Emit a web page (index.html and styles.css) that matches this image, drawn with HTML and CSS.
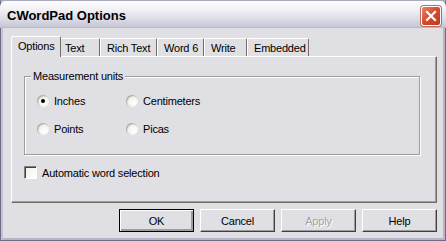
FILE: index.html
```html
<!DOCTYPE html>
<html lang="en">
<head>
    <meta charset="UTF-8">
    <title>CWordPad Options</title>
    <link rel="stylesheet" href="styles.css">
</head>
<body>
    <div class="window">
        <div class="titlebar">
            <span class="title">CWordPad Options</span>
            <span class="close-btn">
                <svg width="12" height="12" viewBox="0 0 12 12">
                    <path d="M2 2 L10 10 M10 2 L2 10" stroke="#fff" stroke-width="2.2" stroke-linecap="square"/>
                </svg>
            </span>
        </div>

        <div class="content">
            <div class="tabs">
                <div class="tab tab-options selected">Options</div>
                <div class="tab tab-text">Text</div>
                <div class="tab tab-rich">Rich Text</div>
                <div class="tab tab-word">Word 6</div>
                <div class="tab tab-write">Write</div>
                <div class="tab tab-embedded">Embedded</div>
            </div>

            <div class="panel">
                <fieldset class="group">
                    <legend>Measurement units</legend>
                    <div class="radio-grid">
                        <label class="radio"><span class="radio-dot checked"></span>Inches</label>
                        <label class="radio"><span class="radio-dot"></span>Centimeters</label>
                        <label class="radio"><span class="radio-dot"></span>Points</label>
                        <label class="radio"><span class="radio-dot"></span>Picas</label>
                    </div>
                </fieldset>

                <label class="check"><span class="check-box"></span>Automatic word selection</label>
            </div>

            <div class="buttons">
                <div class="btn default">OK</div>
                <div class="btn">Cancel</div>
                <div class="btn disabled">Apply</div>
                <div class="btn">Help</div>
            </div>
        </div>
    </div>
</body>
</html>
```

FILE: styles.css
```css
:root {
    --face: #e0dfe3;
    --shadow: #9d9da1;
    --dark: #716f64;
}

body {
    margin: 0;
    background: #ffffff;
}

.window {
    width: 446px;
    height: 241px;
    box-sizing: border-box;
    background: var(--face);
    border: 1px solid #6e6d87;
    border-top-color: #a9a9bd;
    box-shadow: inset 2px 0 0 #c3c3d3, inset -2px 0 0 #b5b5c7, inset 0 -2px 0 #b5b5c7;
    display: flex;
    flex-direction: column;
    font-family: "Liberation Sans", Arial, sans-serif;
    font-size: 11px;
    letter-spacing: -0.2px;
    color: #000;
}

.titlebar {
    height: 26px;
    margin: 0 -1px;
    padding: 0 5px 0 7px;
    display: flex;
    align-items: center;
    justify-content: space-between;
    background: linear-gradient(#ffffff 0%, #f2f2f6 30%, #dcdce6 70%, #c6c6d6 100%);
    border-radius: 6px 6px 0 0;
    border-bottom: 1px solid #b8b8c8;
}

.title {
    font-weight: bold;
    font-size: 13px;
    letter-spacing: 0;
    color: #000;
    margin-top: 2px;
}

.close-btn {
    width: 20px;
    height: 20px;
    margin-top: 3px;
    box-sizing: border-box;
    border: 1px solid #ffffff;
    border-radius: 3px;
    background: linear-gradient(135deg, #e8836a 0%, #d5482b 50%, #c0391e 100%);
    box-shadow: 0 0 0 1px #b96c5c;
    display: flex;
    align-items: center;
    justify-content: center;
}

.content {
    flex: 1;
    padding: 9px 8px 0 10px;
    display: flex;
    flex-direction: column;
}

.tabs {
    display: flex;
    align-items: flex-end;
    height: 19px;
    position: relative;
    z-index: 1;
}

.tab {
    height: 18px;
    padding: 0 0 0 6px;
    display: flex;
    align-items: center;
    box-sizing: border-box;
    background: var(--face);
    border-top: 1px solid #fff;
    border-left: 1px solid #fff;
    border-right: 1px solid var(--dark);
    border-radius: 2px 2px 0 0;
    margin-top: 2px;
}

.tab-options { width: 50px; }
.tab-text { width: 40px; padding-left: 4px; }
.tab-rich { width: 57px; }
.tab-word { width: 47px; }
.tab-write { width: 43px; }
.tab-embedded { width: 62px; }

.tab.selected {
    height: 21px;
    margin: 0 -1px -1px 0;
    padding-top: 3px;
    align-items: flex-start;
    position: relative;
}

.panel {
    height: 147px;
    box-sizing: border-box;
    border-top: 1px solid #fff;
    border-left: 1px solid #fff;
    border-right: 1px solid var(--dark);
    border-bottom: 1px solid var(--dark);
    box-shadow: inset -1px -1px 0 var(--shadow);
    padding: 13px 16px 0 12px;
}

.group {
    margin: 0;
    padding: 0 0 0 12px;
    height: 85px;
    box-sizing: border-box;
    border: 1px solid var(--shadow);
    box-shadow: 1px 1px 0 #fff, inset 1px 1px 0 #fff;
}

.group legend {
    padding: 0 2px;
    margin-left: -6px;
    background: var(--face);
    line-height: 12px;
}

.radio-grid {
    display: grid;
    grid-template-columns: 89px 1fr;
    row-gap: 15px;
    margin-top: 12px;
}

.radio {
    display: flex;
    align-items: center;
    gap: 5px;
    height: 13px;
}

.radio-dot {
    width: 12px;
    height: 12px;
    box-sizing: border-box;
    border-radius: 50%;
    background: radial-gradient(circle at 65% 65%, #ffffff 0%, #f4f4f0 45%, #d6d6ce 100%);
    box-shadow: inset 1px 1px 1px #a8a8a0;
    position: relative;
}

.radio-dot.checked::after {
    content: '';
    position: absolute;
    left: 4px;
    top: 4px;
    width: 4px;
    height: 4px;
    border-radius: 50%;
    background: #000;
}

.check {
    margin-top: 11px;
    display: flex;
    align-items: center;
    gap: 5px;
}

.check-box {
    width: 13px;
    height: 13px;
    box-sizing: border-box;
    background: linear-gradient(135deg, #f0f0ea, #ffffff);
    border-top: 1px solid #808080;
    border-left: 1px solid #808080;
    border-right: 1px solid #ffffff;
    border-bottom: 1px solid #ffffff;
    box-shadow: inset 1px 1px 0 #404040;
}

.buttons {
    display: flex;
    justify-content: flex-end;
    gap: 6px;
    margin-top: 6px;
}

.btn {
    width: 75px;
    height: 23px;
    box-sizing: border-box;
    display: flex;
    align-items: center;
    justify-content: center;
    background: var(--face);
    border-top: 1px solid #fff;
    border-left: 1px solid #fff;
    border-right: 1px solid #404040;
    border-bottom: 1px solid #404040;
    box-shadow: inset -1px -1px 0 var(--shadow);
}

.btn.default {
    border: 1px solid #000;
    box-shadow: inset 1px 1px 0 #fff, inset -2px -2px 0 var(--shadow);
}

.btn.disabled {
    color: #a3a3a3;
    text-shadow: 1px 1px 0 #fff;
}
```
